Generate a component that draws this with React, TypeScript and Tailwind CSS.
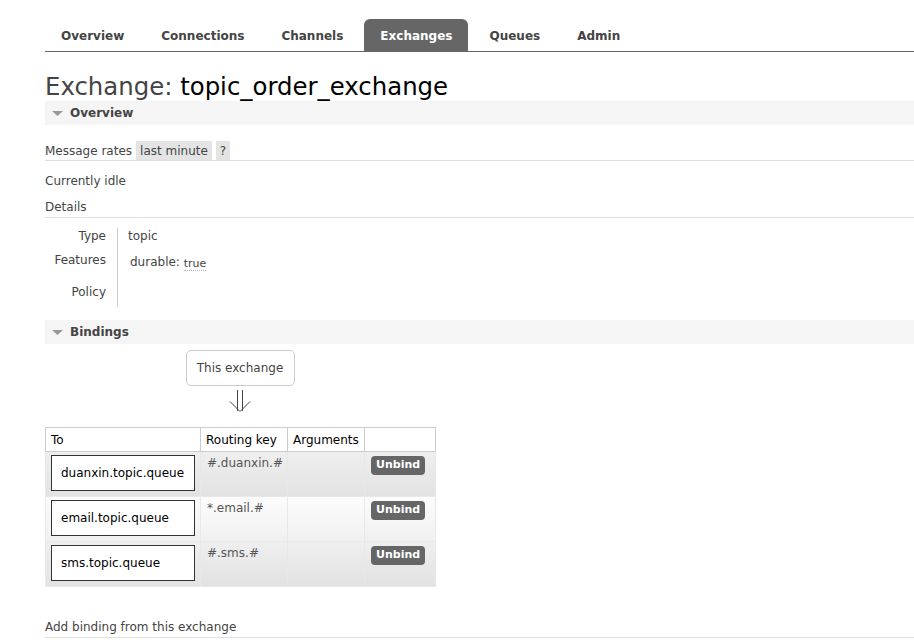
import React from 'react';

const tabs = ['Overview', 'Connections', 'Channels', 'Exchanges', 'Queues', 'Admin'];

const bindings = [
  { queue: 'duanxin.topic.queue', key: '#.duanxin.#', alt: false },
  { queue: 'email.topic.queue', key: '*.email.#', alt: true },
  { queue: 'sms.topic.queue', key: '#.sms.#', alt: false },
];

const SectionHeader = ({ title }: { title: string }) => (
  <div className="flex h-[24px] items-center bg-[#f5f5f5] pl-[7px]">
    <svg width="11" height="7" viewBox="0 0 11 7" className="mr-[7px]">
      <polygon points="0,1 11,1 5.5,6" fill="#999" />
    </svg>
    <span className="text-[12px] font-bold text-[#444]">{title}</span>
  </div>
);

export default function App() {
  return (
    <div className="min-h-[640px] bg-white pl-[45px] text-[12px] text-[#444] [font-family:'DejaVu_Sans',Verdana,sans-serif]">
      {/* nav */}
      <nav className="flex border-b border-[#666] pt-[19px]">
        {tabs.map((t) => (
          <div
            key={t}
            className={
              t === 'Exchanges'
                ? 'mr-[5px] flex h-[32px] items-center rounded-t-[6px] bg-[#666] px-4 pt-[2px] text-[12px] font-bold text-white'
                : 'mr-[5px] flex h-[32px] items-center px-4 pt-[2px] text-[12px] font-bold text-[#444]'
            }
          >
            {t}
          </div>
        ))}
      </nav>

      <h1 className="mt-[21px] text-[24.4px] leading-[28px]">
        <span className="text-[#444]">Exchange: </span>
        <span className="text-black">topic_order_exchange</span>
      </h1>

      <SectionHeader title="Overview" />

      <div className="mt-[16px] flex h-[20px] items-center border-b border-[#ddd]">
        <span className="mr-[4px]">Message rates</span>
        <span className="mr-[4px] flex h-[19px] items-center bg-[#e4e4e4] px-[4px]">last minute</span>
        <span className="flex h-[19px] items-center bg-[#e4e4e4] px-[4px]">?</span>
      </div>

      <div className="mt-[10px] leading-[20px]">Currently idle</div>
      <div className="mt-[6px] border-b border-[#ddd] leading-[20px]">Details</div>

      <div className="mt-[10px] flex flex-col">
        <div className="flex h-[19px]">
          <div className="w-[61px] text-right leading-[17px]">Type</div>
          <div className="ml-[11px] border-l border-[#ccc] pl-[10px] leading-[17px]">topic</div>
        </div>
        <div className="flex h-[32px]">
          <div className="w-[61px] pt-[5px] text-right leading-[17px]">Features</div>
          <div className="ml-[11px] border-l border-[#ccc] pl-[12px] pt-[7px] leading-[17px]">
            durable:{' '}
            <span className="relative top-[1px] border-b border-dotted border-[#bbb] text-[11px]">true</span>
          </div>
        </div>
        <div className="flex h-[28px]">
          <div className="w-[61px] pt-[5px] text-right leading-[17px]">Policy</div>
          <div className="ml-[11px] border-l border-[#ccc]" />
        </div>
      </div>

      <div className="mt-[13px]">
        <SectionHeader title="Bindings" />
      </div>

      <div className="flex w-[390px] flex-col items-center">
        <div className="mt-[6px] flex h-[36px] w-[109px] items-center justify-center rounded-[5px] border border-[#ccc] bg-white">
          This exchange
        </div>
        <svg width="22" height="24" viewBox="0 0 22 24" className="mt-[4px]">
          <line x1="8.5" y1="0" x2="8.5" y2="21" stroke="#444" strokeWidth="1" />
          <line x1="13.5" y1="0" x2="13.5" y2="21" stroke="#444" strokeWidth="1" />
          <polyline points="1,11.5 11,21.5 21,11.5" fill="none" stroke="#444" strokeWidth="1" />
        </svg>
      </div>

      <table className="mt-[13px] w-[391px] border-collapse border border-[#ccc] text-[12px]">
        <thead>
          <tr className="h-[24px] bg-white text-left">
            <th className="w-[155px] border border-[#ccc] pl-[5px] pt-[1px] font-normal text-black">To</th>
            <th className="w-[87px] border border-[#ccc] pl-[5px] pt-[1px] font-normal text-black">Routing key</th>
            <th className="w-[77px] border border-[#ccc] pl-[5px] pt-[1px] font-normal text-black">Arguments</th>
            <th className="border border-[#ccc]" />
          </tr>
        </thead>
        <tbody>
          {bindings.map((b) => (
            <tr
              key={b.queue}
              className={
                b.alt
                  ? 'h-[45px] bg-gradient-to-b from-[#fcfcfc] to-[#f0f0f0]'
                  : 'h-[45px] bg-gradient-to-b from-[#efefef] to-[#e2e2e2]'
              }
            >
              <td className="border border-[#e8e8e8] px-[5px] pb-[5px] pt-[3px] align-top">
                <div className="flex h-[36px] items-center border border-[#333] bg-white pl-[9px] text-black">
                  {b.queue}
                </div>
              </td>
              <td className="border border-[#e8e8e8] pl-[6px] pt-[3px] align-top leading-[17px] text-[#555]">
                {b.key}
              </td>
              <td className="border border-[#e8e8e8]" />
              <td className="border border-[#e8e8e8] pl-[6px] pt-[3px] align-top">
                <span className="inline-flex h-[19px] items-center rounded-[4px] bg-[#666] px-[5px] text-[11px] font-bold text-white">
                  Unbind
                </span>
              </td>
            </tr>
          ))}
        </tbody>
      </table>

      <div className="mt-[30px] border-b border-[#ddd] leading-[20px]">Add binding from this exchange</div>
    </div>
  );
}
